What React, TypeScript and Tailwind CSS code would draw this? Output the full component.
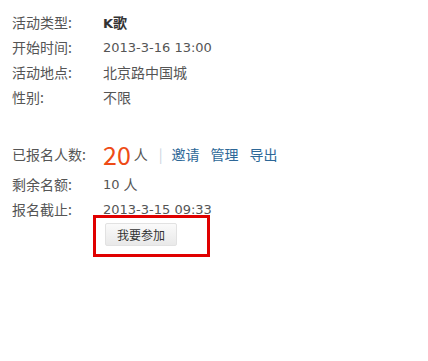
import React from 'react'

const font = { fontFamily: '"Noto Sans CJK SC", "Liberation Sans", sans-serif' }
const num = { fontFamily: '"DejaVu Sans", "Liberation Sans", sans-serif' }

function Row({ label, children, className = '' }: { label: string; children: React.ReactNode; className?: string }) {
  return (
    <div className={'flex items-center h-[25px] ' + className}>
      <div className='w-[91px] shrink-0 text-[#555]'>{label}</div>
      <div className='text-[#555] flex items-center'>{children}</div>
    </div>
  )
}

export default function App() {
  return (
    <div className='w-[428px] h-[361px] bg-white pl-[12px] pt-[10px] text-[14px]' style={font}>
      <Row label='活动类型:'>
        <span className='font-bold text-[#333]'>
          <span className='text-[13px]' style={num}>K</span>歌
        </span>
      </Row>
      <Row label='开始时间:'>
        <span className='text-[13px]' style={num}>2013-3-16 13:00</span>
      </Row>
      <Row label='活动地点:'>北京路中国城</Row>
      <Row label='性别:'>不限</Row>

      <Row label='已报名人数:' className='mt-[27px] h-[35px]'>
        <span className='text-[25px] text-[#ee4b16] leading-none'>20</span>
        <span className='ml-[3px]'>人</span>
        <span className='ml-[11px] mr-[9px] text-[#c8d4e0]'>|</span>
        <a className='text-[#2d6797]'>邀请</a>
        <a className='ml-[11px] text-[#2d6797]'>管理</a>
        <a className='ml-[11px] text-[#2d6797]'>导出</a>
      </Row>
      <Row label='剩余名额:'>
        <span className='text-[13px]' style={num}>10</span>
        <span className='ml-[4px]'>人</span>
      </Row>
      <Row label='报名截止:'>
        <span className='text-[13px]' style={num}>2013-3-15 09:33</span>
      </Row>

      <div className='ml-[93px] mt-[1px] relative w-fit'>
        <button className='h-[23px] px-[11px] text-[12px] text-[#333] border border-[#e2e2e2] bg-gradient-to-b from-[#fafafa] to-[#e9e9e9] rounded-[2px]'>
          我要参加
        </button>
        <div className='absolute left-[-12px] top-[-8px] w-[117px] h-[42px] border-[3px] border-[#e00000]' />
      </div>
    </div>
  )
}
